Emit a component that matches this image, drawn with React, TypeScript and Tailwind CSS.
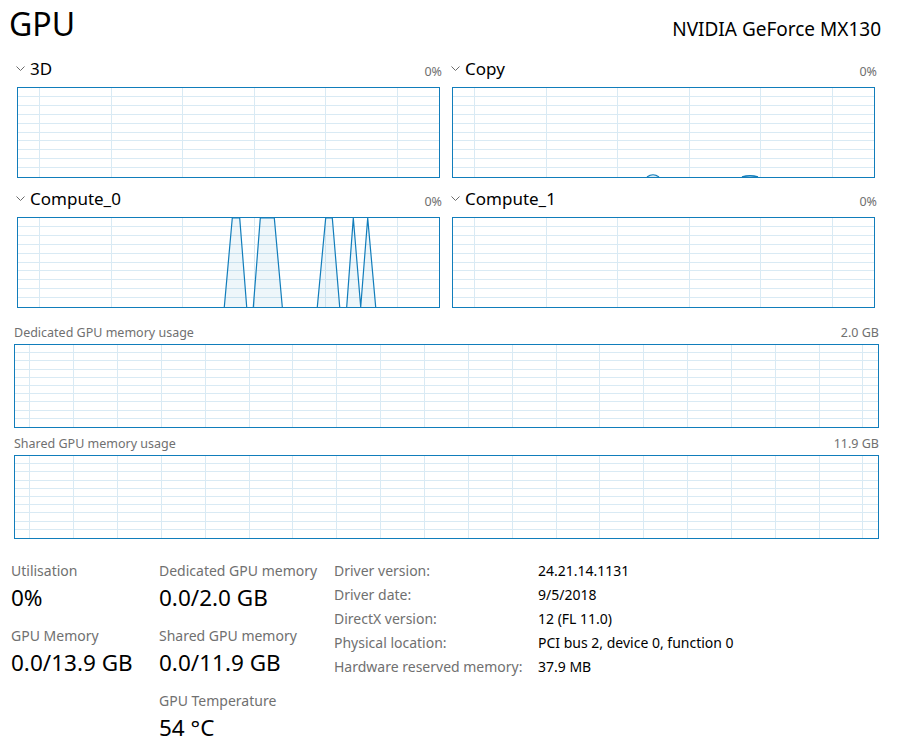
import React from "react";

const BLUE = "#117dbb";
const GRID = "#d9eaf4";

type Spike = number[][];

// compute_0 activity, x/y inside the graph border
const COMPUTE_SPIKES: Spike[] = [
  [[206.3, 89], [214.3, 0], [221.7, 0], [228.7, 89]],
  [[235.3, 89], [242.3, 0], [256.3, 0], [264.3, 89]],
  [[299.3, 89], [307.7, 0], [314.3, 0], [321.7, 89]],
  [[328.7, 89], [335.3, 0], [342.7, 89], [349.7, 0], [357.7, 89]],
];

function Chevron() {
  return (
    <svg width="10" height="6" viewBox="0 0 10 6" className="mb-[6px] mr-[4px] shrink-0">
      <polyline points="0.5,0.5 4.5,4.5 8.5,0.5" fill="none" stroke="#6b6b6b" strokeWidth="1" />
    </svg>
  );
}

function Graph({
  w, h, cols, colStart, colStep, rows, children,
}: {
  w: number; h: number; cols: number; colStart: number; colStep: number; rows: number; children?: React.ReactNode;
}) {
  const xs = Array.from({ length: cols }, (_, i) => Math.round(colStart + i * colStep) + 0.5);
  const ys = Array.from({ length: rows - 1 }, (_, i) => Math.round(((i + 1) * h) / rows) - 0.5);
  return (
    <div className="border border-[#117dbb] bg-white" style={{ width: w + 2, height: h + 2 }}>
      <svg width={w} height={h} className="block">
        {ys.map((y) => (
          <line key={"h" + y} x1={0} x2={w} y1={y} y2={y} stroke={GRID} strokeWidth="1" shapeRendering="crispEdges" />
        ))}
        {xs.map((x) => (
          <line key={"v" + x} x1={x} x2={x} y1={0} y2={h} stroke={GRID} strokeWidth="1" shapeRendering="crispEdges" />
        ))}
        {children}
      </svg>
    </div>
  );
}

function EngineGraph({ label, spikes, bumps }: { label: string; spikes?: Spike[]; bumps?: boolean }) {
  return (
    <div className="flex flex-col">
      <div className="flex items-end justify-between h-full -ml-[1px] -mr-[2px] pb-[9px]">
        <div className="flex items-end">
          <Chevron />
          <span className="text-[17px] leading-[18px] text-black">{label}</span>
        </div>
        <span className="text-[12.5px] leading-[13px] text-[#707070]">0%</span>
      </div>
      <Graph w={421} h={89} cols={6} colStart={21} colStep={71.6} rows={10}>
        {spikes?.map((s, i) => (
          <polyline
            key={i}
            points={s.map((p) => p.join(",")).join(" ")}
            fill="rgba(17,125,187,0.07)"
            stroke={BLUE}
            strokeWidth="1.2"
          />
        ))}
        {bumps && (
          <>
            <path d="M194 89 Q200 84.5 206 89" fill="rgba(17,125,187,0.15)" stroke={BLUE} strokeWidth="1.2" />
            <path d="M289 89 Q297 86.5 305 89" fill="rgba(17,125,187,0.15)" stroke={BLUE} strokeWidth="1.4" />
          </>
        )}
      </Graph>
    </div>
  );
}

function MemoryGraph({ label, max }: { label: string; max: string }) {
  return (
    <div className="flex flex-col w-[865px]">
      <div className="flex items-end justify-between pb-[5px]">
        <span className="text-[12.5px] leading-[13px] text-[#707070]">{label}</span>
        <span className="text-[12.5px] leading-[13px] text-[#707070]">{max}</span>
      </div>
      <Graph w={863} h={82} cols={20} colStart={14.3} colStep={43.85} rows={10} />
    </div>
  );
}

function Stat({ label, value }: { label: string; value: string }) {
  return (
    <div className="flex flex-col h-[65px]">
      <span className="text-[14px] leading-[20px] text-[#707070]">{label}</span>
      <span className="text-[22.5px] leading-[34px] text-black">{value}</span>
    </div>
  );
}

const DETAILS = [
  ["Driver version:", "24.21.14.1131"],
  ["Driver date:", "9/5/2018"],
  ["DirectX version:", "12 (FL 11.0)"],
  ["Physical location:", "PCI bus 2, device 0, function 0"],
  ["Hardware reserved memory:", "37.9 MB"],
];

export default function App() {
  return (
    <div className="w-[902px] h-[750px] bg-white overflow-hidden font-['Noto_Sans',sans-serif]">
      {/* Header */}
      <div className="flex items-baseline justify-between h-[56px] pl-[9px] pr-[21px]">
        <h1 className="text-[32px] leading-[48px] text-black">GPU</h1>
        <span className="text-[19px] text-black">NVIDIA GeForce MX130</span>
      </div>

      {/* Engines */}
      <div className="grid grid-cols-[423px_423px] grid-rows-[122px_130px] gap-x-[12px] pl-[17px]">
        <EngineGraph label="3D" />
        <EngineGraph label="Copy" bumps />
        <EngineGraph label="Compute_0" spikes={COMPUTE_SPIKES} />
        <EngineGraph label="Compute_1" />
      </div>

      {/* Memory */}
      <div className="flex flex-col gap-[9px] pl-[14px] pt-[18px]">
        <MemoryGraph label="Dedicated GPU memory usage" max="2.0 GB" />
        <MemoryGraph label="Shared GPU memory usage" max="11.9 GB" />
      </div>

      {/* Stats */}
      <div className="flex pt-[22px]">
        <div className="flex flex-col w-[159px] pl-[11px]">
          <Stat label="Utilisation" value="0%" />
          <Stat label="GPU Memory" value="0.0/13.9 GB" />
        </div>
        <div className="flex flex-col w-[175px]">
          <Stat label="Dedicated GPU memory" value="0.0/2.0 GB" />
          <Stat label="Shared GPU memory" value="0.0/11.9 GB" />
          <Stat label="GPU Temperature" value="54 °C" />
        </div>
        <div className="grid grid-cols-[204px_auto] auto-rows-[24px] text-[14px] leading-[20px]">
          {DETAILS.map(([k, v]) => (
            <React.Fragment key={k}>
              <span className="text-[#707070]">{k}</span>
              <span className="text-black">{v}</span>
            </React.Fragment>
          ))}
        </div>
      </div>
    </div>
  );
}
